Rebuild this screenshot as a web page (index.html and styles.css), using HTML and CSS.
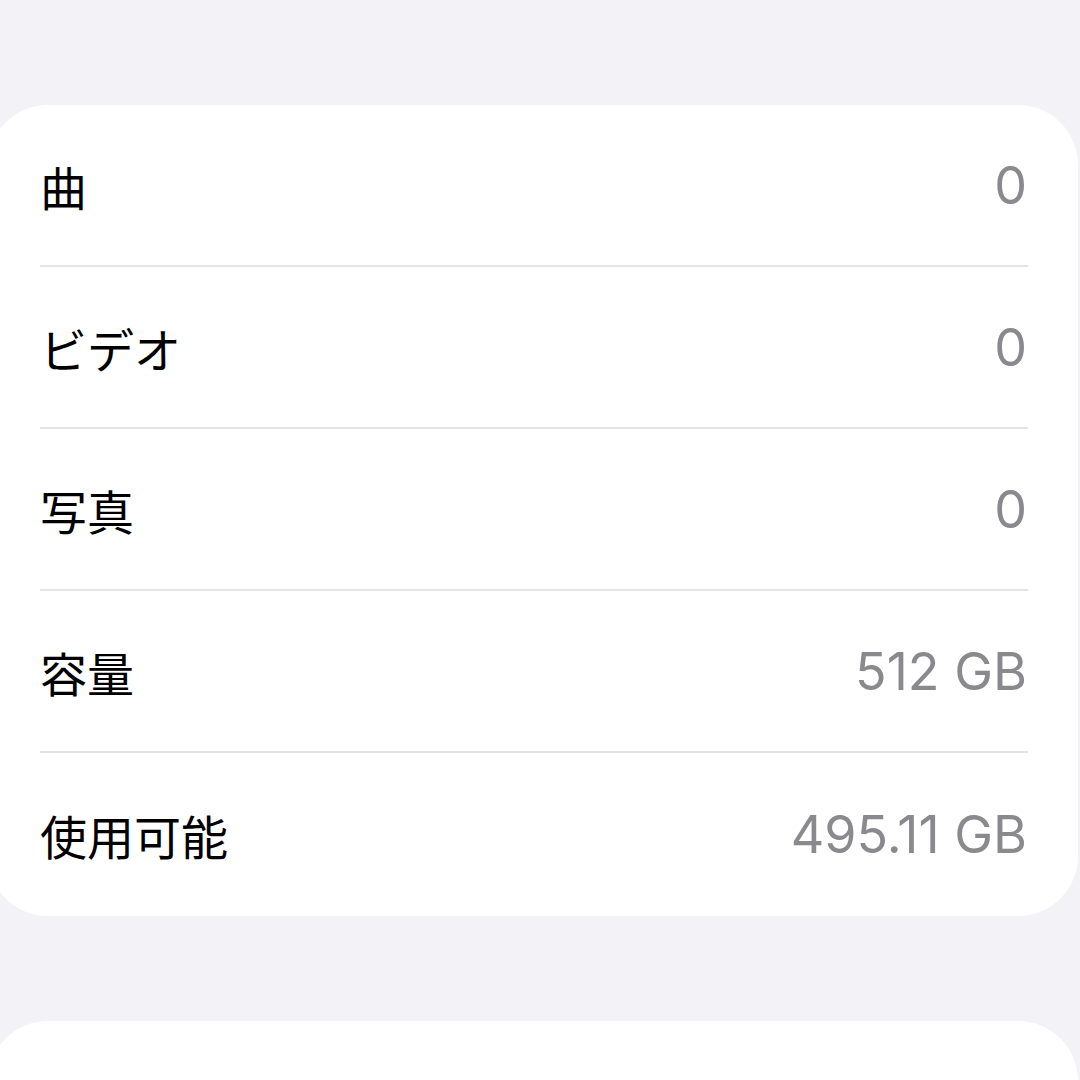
FILE: index.html
```html
<!DOCTYPE html>
<html lang="ja">
<head>
    <meta charset="UTF-8">
    <meta name="viewport" content="width=device-width, initial-scale=1.0">
    <title>情報</title>
    <link rel="stylesheet" href="styles.css">
</head>
<body>
    <div class="page">
        <div class="card">
            <div class="row">
                <span class="label">曲</span>
                <span class="value">0</span>
            </div>
            <div class="row">
                <span class="label">ビデオ</span>
                <span class="value">0</span>
            </div>
            <div class="row">
                <span class="label">写真</span>
                <span class="value">0</span>
            </div>
            <div class="row">
                <span class="label">容量</span>
                <span class="value">512 GB</span>
            </div>
            <div class="row">
                <span class="label">使用可能</span>
                <span class="value">495.11 GB</span>
            </div>
        </div>

        <div class="card card-next"></div>
    </div>
</body>
</html>
```

FILE: styles.css
```css
body {
    margin: 0;
    padding: 0;
    background-color: #f2f2f7;
    font-family: Inter, "Noto Sans CJK JP", sans-serif;
    overflow: hidden;
}

.page {
    padding-top: 105px;
    width: 1080px;
    height: 1080px;
    box-sizing: border-box;
    overflow: hidden;
}

.card {
    background-color: #fff;
    border-radius: 60px;
    margin: 0 2px 0 -12px;
    padding: 0 50px 0 52px;
}

.row {
    display: flex;
    justify-content: space-between;
    align-items: center;
    height: 160px;
    padding-right: 1px;
    border-bottom: 2px solid #e3e3e6;
}

.row:last-child {
    border-bottom: none;
    height: 163px;
}

.label {
    font-family: "Noto Sans CJK JP", sans-serif;
    font-size: 47px;
    color: #000;
}

.value {
    font-size: 52px;
    color: #8a8a8e;
}

.card-next {
    margin-top: 105px;
    height: 80px;
    border-radius: 60px 60px 0 0;
}
```
